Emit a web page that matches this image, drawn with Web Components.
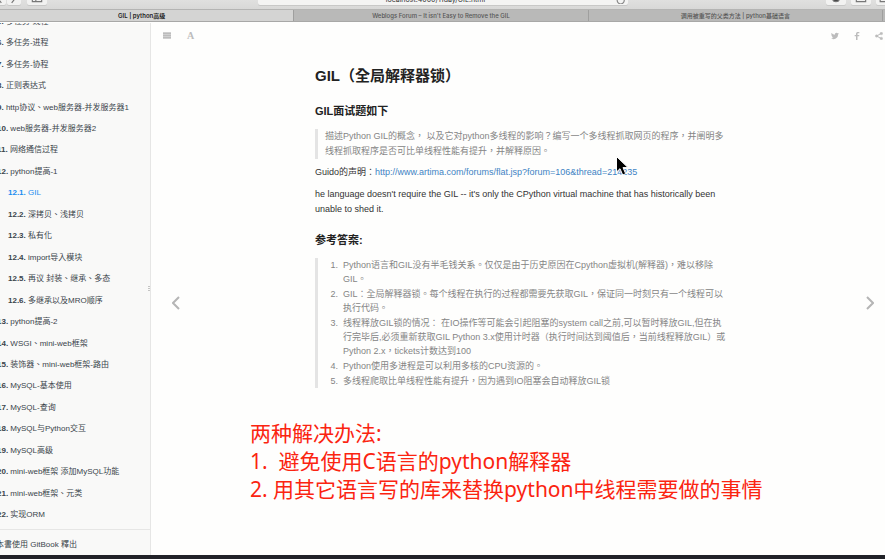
<!DOCTYPE html>
<html lang="zh-TW">
<head>
<meta charset="utf-8">
<title>GIL | python高级</title>
<style>
html, body { margin: 0; height: 100%; }
body {
  overflow: hidden;
  font-family: "Liberation Sans", "Noto Sans CJK TC", sans-serif;
  background: #fefefd;
  color: #333;
}
</style>
</head>
<body>
<gil-window></gil-window>

<template id="t-window">
<style>
:host { display: flex; flex-direction: column; height: 100%; min-height: 0; position: relative; border-bottom: 4px solid #212228; box-sizing: border-box; }
.body { flex: 1; display: flex; min-height: 0; }
book-sidebar { flex: none; }
book-page { flex: 1; min-width: 0; }
mouse-cursor { position: absolute; left: 616px; top: 156px; }
</style>
<browser-bar></browser-bar>
<browser-tabs></browser-tabs>
<div class="body">
  <book-sidebar></book-sidebar>
  <book-page></book-page>
</div>
<mouse-cursor></mouse-cursor>
</template>

<template id="t-bar">
<style>
:host { display: block; height: 9px; overflow: hidden; background: linear-gradient(#e0e0df, #d8d8d7); flex: none; }
.row { display: grid; grid-template-columns: 1fr 370px 1fr; align-items: center; height: 16px; margin-top: -11px; }
.left, .right { display: flex; gap: 1px; }
.left { margin-left: -8px; }
.left button:nth-child(3) { margin-left: 5px; }
.right { justify-content: flex-end; gap: 5px; margin-right: -11px; }
button { width: 20px; height: 16px; box-sizing: border-box; padding: 0; border: 0; border-radius: 2px; background: #f2f2f1; box-shadow: 0 1px 0 #c8c8c7; color: #777; display: flex; align-items: center; justify-content: center; }
.left button:nth-child(1), .left button:nth-child(2) { width: 14px; }
svg { width: 14px; height: 14px; fill: none; stroke: currentColor; }
.url { display: flex; align-items: center; background: #f4f4f3; border-radius: 2px; height: 16px; box-shadow: 0 1px 0 #c8c8c7; color: #888; }
input { flex: 1; min-width: 0; height: 16px; box-sizing: border-box; border: 0; padding: 5px 0 0; margin: 0; background: transparent; text-align: center; font: 7px Inter, sans-serif; color: #333; outline: 0; }
</style>
<div class="row">
  <div class="left">
    <button aria-label="返回"><svg viewBox="0 0 12 12"><path d="M8 1 4 6l4 5"/></svg></button>
    <button aria-label="前进"><svg viewBox="0 0 12 12"><path d="m4 1 4 5-4 5"/></svg></button>
    <button aria-label="边栏"><svg viewBox="0 0 12 12"><path d="M2 1h8v9H2zM5 1v9"/></svg></button>
  </div>
  <div class="url"><input aria-label="地址" value="localhost:4000/11day/GIL.html"><svg viewBox="0 0 12 12"><path d="M8 7a3 3 0 1 1-2-1"/></svg></div>
  <div class="right">
    <button aria-label="下载"><svg viewBox="0 0 12 12"><circle cx="6" cy="7" r="3" fill="#444"/></svg></button>
    <button aria-label="分享"><svg viewBox="0 0 12 12"><path d="M4 4H2v6h8V4H8M6 1v6"/></svg></button>
    <button aria-label="标签页"><svg viewBox="0 0 12 12"><path d="M1 3h6v7H1zM4 3V1h7v7H7"/></svg></button>
  </div>
</div>
</template>

<template id="t-tabs">
<style>
:host { display: grid; grid-template-columns: repeat(3, 1fr); flex: none; height: 13px; box-sizing: border-box; border-bottom: 1px solid #a8a8a7; border-top: 1px solid #b4b4b3; background: #b9b9b8; padding-right: 2px; margin-bottom: 1px; }
button { min-width: 0; border: 0; border-right: 1px solid #9f9f9e; padding: 0; background: #b9b9b8; font: 500 6px/11px Inter, "Noto Sans CJK SC", sans-serif; color: #555; white-space: nowrap; overflow: hidden; }
button[aria-selected=true] { background: #d4d4d3; color: #222; font-weight: 600; padding-right: 10px; }
</style>
<button role="tab" aria-selected="true">GIL | python高级</button>
<button role="tab">Weblogs Forum – It isn't Easy to Remove the GIL</button>
<button role="tab">调用被重写的父类方法 | python基础语言</button>
</template>

<template id="t-sidebar">
<style>
:host { display: flex; flex-direction: column; width: 151px; box-sizing: border-box; border-right: 1px solid #e6e6e5; background: #f9f9f8; overflow: hidden; position: relative; font-size: 8px; color: #3a444b; }
nav { flex: 1; display: flex; flex-direction: column; margin: -12px 0 3px -3px; }
chapter-link { flex: 1; }
footer { height: 25px; line-height: 29px; border-top: 1px solid #e6e6e5; }
footer a { color: inherit; text-decoration: none; margin-left: -4px; white-space: nowrap; }
.grip { position: absolute; right: 0; top: 263px; width: 2px; height: 6px; background: repeating-linear-gradient(#c4c4c3 0 1px, transparent 1px 2px); }
</style>
<nav aria-label="目录">
<chapter-link n="5.">多任务-线程</chapter-link>
<chapter-link n="6.">多任务-进程</chapter-link>
<chapter-link n="7.">多任务-协程</chapter-link>
<chapter-link n="8.">正则表达式</chapter-link>
<chapter-link n="9.">http协议、web服务器-并发服务器1</chapter-link>
<chapter-link n="10.">web服务器-并发服务器2</chapter-link>
<chapter-link n="11.">网络通信过程</chapter-link>
<chapter-link n="12.">python提高-1</chapter-link>
<chapter-link n="12.1." sub active>GIL</chapter-link>
<chapter-link n="12.2." sub>深拷贝、浅拷贝</chapter-link>
<chapter-link n="12.3." sub>私有化</chapter-link>
<chapter-link n="12.4." sub>import导入模块</chapter-link>
<chapter-link n="12.5." sub>再议 封装、继承、多态</chapter-link>
<chapter-link n="12.6." sub>多继承以及MRO顺序</chapter-link>
<chapter-link n="13.">python提高-2</chapter-link>
<chapter-link n="14.">WSGI、mini-web框架</chapter-link>
<chapter-link n="15.">装饰器、mini-web框架-路由</chapter-link>
<chapter-link n="16.">MySQL-基本使用</chapter-link>
<chapter-link n="17.">MySQL-查询</chapter-link>
<chapter-link n="18.">MySQL与Python交互</chapter-link>
<chapter-link n="19.">MySQL高级</chapter-link>
<chapter-link n="20.">mini-web框架 添加MySQL功能</chapter-link>
<chapter-link n="21.">mini-web框架、元类</chapter-link>
<chapter-link n="22.">实现ORM</chapter-link>
</nav>
<footer><a href="#gitbook">本書使用 GitBook 釋出</a></footer>
<div class="grip"></div>
</template>

<template id="t-chapter">
<style>
:host { display: flex; align-items: center; min-height: 0; }
:host([sub]) { padding-left: 11px; }
:host([active]) { color: #1a8cf0; }
a { color: inherit; text-decoration: none; white-space: nowrap; line-height: 12px; }
</style>
<a href="#"><b></b> <slot></slot></a>
</template>

<template id="t-page">
<style>
:host { display: flex; flex-direction: column; position: relative; }
header { display: flex; align-items: center; gap: 14px; height: 26px; padding: 0 2px 0 12px; color: #bcbcbc; flex: none; }
header button { border: 0; padding: 0; background: none; color: inherit; display: flex; }
header button:nth-child(3) { margin-left: auto; }
header svg { width: 8px; height: 8px; display: block; }
header button:nth-child(2) { font: bold 10px/10px "Liberation Serif", serif; margin-left: 2px; }
article { width: 406px; max-width: 100%; margin: 0 auto; font-size: 9px; line-height: 15px; white-space: nowrap; }
h1 { font-size: 15px; line-height: 20px; margin: 17px 0; color: #222; }
h3 { font-size: 11px; line-height: 16px; margin: 0 0 10px; color: #222; }
blockquote { margin: 0 0 6px; padding-left: 7px; border-left: 3px solid #e4e4e4; color: #858585; }
p { margin: 0 0 7px; }
p + h3 { margin-top: 15px; }
a { color: #4183c4; text-decoration: none; }
ol { margin: 0; padding: 0 0 0 18px; display: grid; gap: 1px; line-height: 14px; }
li::marker { content: counter(list-item) ".\00a0\00a0"; }
.pager { position: absolute; top: 273px; width: 8px; height: 14px; color: #b5b5b5; }
.pager svg { display: block; width: 8px; height: 14px; }
.prev { left: 21px; }
.next { right: 11px; }
user-note { margin: 25px 0 0 99px; }
</style>
<header>
  <button aria-label="目录"><svg viewBox="0 0 8 8" fill="currentColor"><path d="M0 1h8v1H0zM0 3h8v1H0zM0 5h8v1H0z"/><path d="M0 0h8v7H0z" opacity=".7"/></svg></button>
  <button aria-label="字体">A</button>
  <button aria-label="Twitter"><svg viewBox="0 0 24 24" fill="currentColor"><path d="M24 4.6a10 10 0 0 1-2.8.8 5 5 0 0 0 2.1-2.7 10 10 0 0 1-3.1 1.2 4.9 4.9 0 0 0-8.4 4.5A14 14 0 0 1 1.7 3.1a4.9 4.9 0 0 0 1.5 6.6 5 5 0 0 1-2.2-.6 4.9 4.9 0 0 0 3.9 4.9 5 5 0 0 1-2.2.1 4.9 4.9 0 0 0 4.6 3.4A10 10 0 0 1 0 19.5 14 14 0 0 0 21.5 7.1 10 10 0 0 0 24 4.6z"/></svg></button>
  <button aria-label="Facebook"><svg viewBox="0 0 24 24" fill="currentColor"><path d="M9 24V13H5V9h4V6c0-4 2.5-6 6-6h4v4h-3c-2 0-2.5 1-2.5 2.500V9H19l-.7 4h-4.8v11z"/></svg></button>
  <button aria-label="分享"><svg viewBox="0 0 24 24" fill="currentColor" stroke="currentColor"><path d="M19 4 5 12l14 8" fill="none" stroke-width="3"/><circle cx="19" cy="4.5" r="4"/><circle cx="5" cy="12" r="4"/><circle cx="19" cy="19.5" r="4"/></svg></button>
</header>
<article>
  <h1>GIL（全局解释器锁）</h1>
  <h3>GIL面试题如下</h3>
  <blockquote>描述Python GIL的概念， 以及它对python多线程的影响？编写一个多线程抓取网页的程序，并阐明多<br>线程抓取程序是否可比单线程性能有提升，并解释原因。</blockquote>
  <p>Guido的声明：<a href="#artima">http://www.artima.com/forums/flat.jsp?forum=106&amp;thread=214235</a></p>
  <p>he language doesn't require the GIL -- it's only the CPython virtual machine that has historically been<br>unable to shed it.</p>
  <h3>参考答案:</h3>
  <blockquote>
    <ol>
      <li>Python语言和GIL没有半毛钱关系。仅仅是由于历史原因在Cpython虚拟机(解释器)，难以移除<br>GIL。</li>
      <li>GIL：全局解释器锁。每个线程在执行的过程都需要先获取GIL，保证同一时刻只有一个线程可以<br>执行代码。</li>
      <li>线程释放GIL锁的情况： 在IO操作等可能会引起阻塞的system call之前,可以暂时释放GIL,但在执<br>行完毕后,必须重新获取GIL Python 3.x使用计时器（执行时间达到阈值后，当前线程释放GIL）或<br>Python 2.x，tickets计数达到100</li>
      <li>Python使用多进程是可以利用多核的CPU资源的。</li>
      <li>多线程爬取比单线程性能有提升，因为遇到IO阻塞会自动释放GIL锁</li>
    </ol>
  </blockquote>
</article>
<user-note lang="zh-CN">两种解决办法:
1.  避免使用C语言的python解释器
2. 用其它语言写的库来替换python中线程需要做的事情</user-note>
<a class="pager prev" href="#prev" aria-label="上一页"><svg viewBox="0 0 8 14" fill="none" stroke="currentColor" stroke-width="2"><path d="M7 1 1 7l6 6"/></svg></a>
<a class="pager next" href="#next" aria-label="下一页"><svg viewBox="0 0 8 14" fill="none" stroke="currentColor" stroke-width="2"><path d="m1 1 6 6-6 6"/></svg></a>
</template>

<template id="t-note">
<style>
:host { display: block; font: 21px/28px "Noto Sans", "Noto Sans CJK SC", sans-serif; color: #fb2410; }
slot { white-space: pre; }
</style>
<slot></slot>
</template>

<template id="t-cursor">
<style>
:host { display: block; width: 13px; height: 20px; pointer-events: none; }
svg { display: block; width: 13px; height: 20px; }
</style>
<svg viewBox="0 0 13 20"><path d="M.5.5v15.500l3.500-3.300 2.700 6.300 3-1.300L7 11.600h5z" fill="#000" stroke="#fff"/></svg>
</template>

<script>
function define(name, templateId, setup) {
  customElements.define(name, class extends HTMLElement {
    constructor() {
      super();
      const root = this.attachShadow({ mode: 'open' });
      root.append(document.getElementById(templateId).content.cloneNode(true));
    }
    connectedCallback() {
      if (setup) setup(this, this.shadowRoot);
    }
  });
}
define('user-note', 't-note');
define('mouse-cursor', 't-cursor');
define('chapter-link', 't-chapter', (host, root) => {
  root.querySelector('b').textContent = host.getAttribute('n');
});
define('browser-bar', 't-bar');
define('browser-tabs', 't-tabs');
define('book-sidebar', 't-sidebar');
define('book-page', 't-page');
define('gil-window', 't-window');
</script>
</body>
</html>
